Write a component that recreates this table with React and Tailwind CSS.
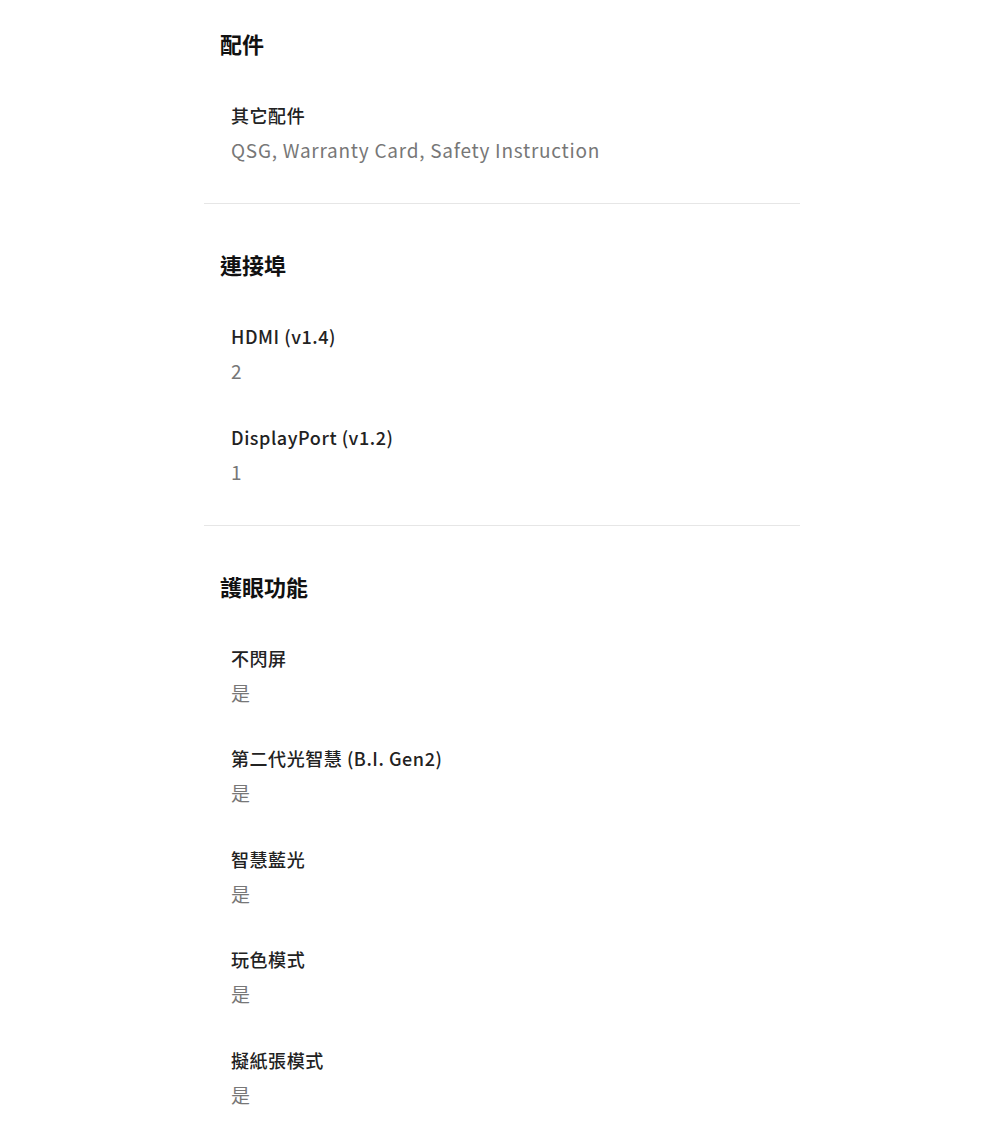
export default function App() {
  const sections = [
    { title: "配件", items: [["其它配件", "QSG, Warranty Card, Safety Instruction"]] },
    { title: "連接埠", items: [["HDMI (v1.4)", "2"], ["DisplayPort (v1.2)", "1"]] },
    {
      title: "護眼功能",
      items: [
        ["不閃屏", "是"],
        ["第二代光智慧 (B.I. Gen2)", "是"],
        ["智慧藍光", "是"],
        ["玩色模式", "是"],
        ["擬紙張模式", "是"],
      ],
    },
  ];
  return (
    <div
      className="min-h-[1133px] bg-white pt-[28px]"
      style={{ fontFamily: '"Noto Sans CJK TC", "Noto Sans", sans-serif' }}
    >
      <div className="ml-[204px] w-[596px]">
        {sections.map((s, i) => (
          <div key={s.title}>
            {i > 0 && <div className="mb-[45px] h-px bg-[#e6e6e6]" />}
            <div className="pb-[39px]">
              <h2 className="pl-[16px] text-[22px] font-bold leading-[30px] text-[#111]">{s.title}</h2>
              <div className="mt-[43px] flex flex-col gap-[37.5px] pl-[27px]">
                {s.items.map(([k, v]) => (
                  <div key={k}>
                    <div className="text-[18px] font-medium leading-[28px] tracking-[0.55px] text-[#222]">{k}</div>
                    <div className="mt-[7px] text-[19px] leading-[28px] tracking-[0.75px] text-[#777]">{v}</div>
                  </div>
                ))}
              </div>
            </div>
          </div>
        ))}
      </div>
    </div>
  );
}
